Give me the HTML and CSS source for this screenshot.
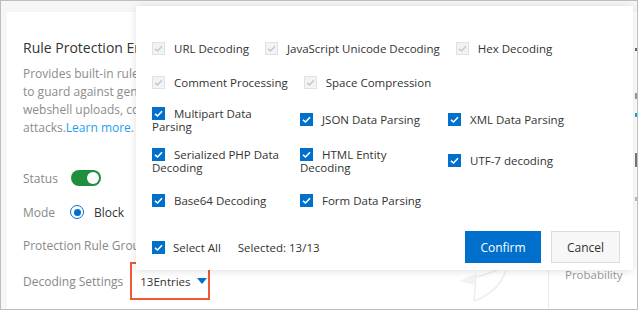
FILE: index.html
```html
<!DOCTYPE html>
<html>
<head>
<meta charset="utf-8">
<link rel="stylesheet" href="styles.css">
</head>
<body>
<div class="frame">
  <div class="card">
    <div class="main">
      <h2 class="title clip">Rule Protection Engine</h2>
      <div class="desc">
        <div class="line clip">Provides built-in rule groups</div>
        <div class="line clip">to guard against generic web attacks</div>
        <div class="line clip">webshell uploads, command injection</div>
        <div class="line">attacks.<a class="link">Learn more</a>.</div>
      </div>
      <div class="row row-status">
        <span class="lbl">Status</span>
        <span class="switch"><span class="knob"></span></span>
      </div>
      <div class="row row-mode">
        <span class="lbl">Mode</span>
        <span class="radio"><span class="dot"></span></span>
        <span class="radio-text">Block</span>
      </div>
      <div class="row row-group">
        <span class="lbl clip">Protection Rule Group</span>
      </div>
      <div class="row row-dec">
        <span class="lbl">Decoding Settings</span>
        <span class="entries">13Entries<span class="caret"></span></span>
      </div>
    </div>
    <div class="side">
      <div class="prob">Probability</div>
    </div>
    <div class="edge">
      <span class="mk mk1"></span>
      <span class="mk mk2"></span>
      <span class="mk mk3"></span>
      <span class="mk mk4"></span>
      <span class="mk mk5"></span>
    </div>
    <svg class="leaf" width="60" height="40" viewBox="0 0 60 40">
      <path d="M2 16 L20 8 L18 20 Z" fill="#f2f2f2"/>
      <path d="M17 36 L19 12 Q32 9 42 4" stroke="#ededed" stroke-width="1.4" fill="none"/>
      <path d="M17 36 Q44 26 50 2" stroke="#ededed" stroke-width="1.4" fill="none"/>
    </svg>
  </div>

  <div class="popup">
    <div class="flow">
      <label class="opt"><span class="cb dis"><svg viewBox="0 0 13 13"><path d="M3 6.8 L5.5 9 L10 4.3"/></svg></span><span class="t">URL Decoding</span></label>
      <label class="opt"><span class="cb dis"><svg viewBox="0 0 13 13"><path d="M3 6.8 L5.5 9 L10 4.3"/></svg></span><span class="t">JavaScript Unicode Decoding</span></label>
      <label class="opt"><span class="cb dis"><svg viewBox="0 0 13 13"><path d="M3 6.8 L5.5 9 L10 4.3"/></svg></span><span class="t">Hex Decoding</span></label>
    </div>
    <div class="flow">
      <label class="opt"><span class="cb dis"><svg viewBox="0 0 13 13"><path d="M3 6.8 L5.5 9 L10 4.3"/></svg></span><span class="t">Comment Processing</span></label>
      <label class="opt"><span class="cb dis"><svg viewBox="0 0 13 13"><path d="M3 6.8 L5.5 9 L10 4.3"/></svg></span><span class="t">Space Compression</span></label>
    </div>
    <div class="grid">
      <label class="gopt"><span class="cb on"><svg viewBox="0 0 13 13"><path d="M3 6.8 L5.5 9 L10 4.3"/></svg></span>Multipart Data Parsing</label>
      <label class="gopt"><span class="cb on"><svg viewBox="0 0 13 13"><path d="M3 6.8 L5.5 9 L10 4.3"/></svg></span>JSON Data Parsing</label>
      <label class="gopt"><span class="cb on"><svg viewBox="0 0 13 13"><path d="M3 6.8 L5.5 9 L10 4.3"/></svg></span>XML Data Parsing</label>
      <label class="gopt"><span class="cb on"><svg viewBox="0 0 13 13"><path d="M3 6.8 L5.5 9 L10 4.3"/></svg></span>Serialized PHP Data Decoding</label>
      <label class="gopt"><span class="cb on"><svg viewBox="0 0 13 13"><path d="M3 6.8 L5.5 9 L10 4.3"/></svg></span>HTML Entity Decoding</label>
      <label class="gopt"><span class="cb on"><svg viewBox="0 0 13 13"><path d="M3 6.8 L5.5 9 L10 4.3"/></svg></span>UTF-7 decoding</label>
      <label class="gopt"><span class="cb on"><svg viewBox="0 0 13 13"><path d="M3 6.8 L5.5 9 L10 4.3"/></svg></span>Base64 Decoding</label>
      <label class="gopt"><span class="cb on"><svg viewBox="0 0 13 13"><path d="M3 6.8 L5.5 9 L10 4.3"/></svg></span>Form Data Parsing</label>
    </div>
    <div class="footer">
      <label class="opt all"><span class="cb on"><svg viewBox="0 0 13 13"><path d="M3 6.8 L5.5 9 L10 4.3"/></svg></span><span class="t">Select All</span></label>
      <span class="count">Selected: 13/13</span>
      <span class="spacer"></span>
      <button class="btn primary">Confirm</button>
      <button class="btn">Cancel</button>
    </div>
  </div>
</div>
</body>
</html>
```

FILE: styles.css
```css
* { box-sizing: border-box; }
html, body { margin: 0; padding: 0; }
body {
  font-family: "Segoe UI", "Open Sans", "Liberation Sans", sans-serif;
  font-size: 12px;
  color: #333;
  background: #fff;
}
.frame {
  position: relative;
  width: 638px;
  height: 310px;
  border: 1px solid #bdbdbd;
  background: #f6f6f6;
  overflow: hidden;
  padding: 11px 0 0 6px;
}
.card {
  position: relative;
  display: flex;
  height: 298px;
  background: #fff;
  border-bottom: 1px solid #d4d4d4;
}
.main {
  width: 541px;
  padding: 26px 0 0 16px;
  overflow: hidden;
}
.clip {
  display: block;
  width: 113px;
  overflow: hidden;
  white-space: nowrap;
}
.title {
  margin: 0;
  font-size: 14px;
  font-weight: normal;
  line-height: 20px;
  color: #333;
}
.desc {
  margin-top: 7px;
  color: #8c8c8c;
  line-height: 18px;
}
.line { white-space: nowrap; }
.link { color: #1a9ff0; }
.row {
  display: flex;
  align-items: center;
  height: 24px;
  white-space: nowrap;
}
.lbl { color: #888; min-width: 48px; }
.row-status { margin-top: 29px; }
.row-mode { margin-top: 10px; }
.row-group { margin-top: 9px; }
.row-dec { margin-top: 5px; height: 38px; }
.switch {
  display: inline-flex;
  align-items: center;
  justify-content: flex-end;
  width: 30px;
  height: 16px;
  border-radius: 8px;
  background: #1f8f3d;
  padding: 0 2px;
}
.knob {
  width: 12px;
  height: 12px;
  border-radius: 50%;
  background: #fff;
}
.radio {
  display: inline-flex;
  align-items: center;
  justify-content: center;
  width: 14px;
  height: 14px;
  border: 1.5px solid #0070cc;
  border-radius: 50%;
  margin-left: -1px;
}
.dot { width: 7px; height: 7px; border-radius: 50%; background: #0070cc; }
.radio-text { margin-left: 10px; color: #333; }
.entries {
  display: inline-flex;
  align-items: center;
  margin-left: 7px;
  height: 38px;
  width: 80px;
  border: 2px solid #ee5a35;
  padding-left: 8px;
  color: #333;
  font-size: 11.5px;
}
.caret {
  margin-left: 6px;
  width: 0;
  height: 0;
  border-left: 5px solid transparent;
  border-right: 5px solid transparent;
  border-top: 6px solid #0070cc;
}
.side {
  width: 85px;
  border-left: 1px solid #ebebeb;
  padding: 255px 0 0 16px;
}
.prob { color: #999; line-height: 16px; white-space: nowrap; font-size: 11.5px; }
.edge {
  width: 4px;
  display: flex;
  flex-direction: column;
  align-items: flex-start;
}
.mk { display: block; width: 2px; margin-left: 2px; }
.mk1 { margin-top: 36px; height: 3px; background: #666; }
.mk2 { margin-top: 42px; height: 6px; background: #999; }
.mk3 { margin-top: 14px; height: 4px; background: #1a9ff0; }
.mk4 { margin-top: 36px; height: 14px; background: #777; }
.mk5 { margin-top: 30px; height: 4px; background: #bbb; }
.leaf { position: absolute; left: 450px; top: 253px; }

.popup {
  position: absolute;
  left: 135px;
  top: 5px;
  width: 497px;
  height: 264px;
  background: #fff;
  box-shadow: 0 1px 8px rgba(0,0,0,0.13);
  padding: 25px 13px 0 16px;
  font-size: 11.5px;
}
.flow {
  display: flex;
  align-items: center;
  gap: 16px;
  height: 34px;
}
.opt {
  display: flex;
  align-items: center;
  white-space: nowrap;
  color: #333;
}
.cb {
  display: inline-block;
  width: 13px;
  height: 13px;
  margin-right: 9px;
  flex: none;
}
.cb svg { display: block; width: 13px; height: 13px; }
.cb path { fill: none; stroke-width: 1.6; }
.cb.dis { background: #f3f3f3; border: 1px solid #e1e1e1; }
.cb.dis svg { margin: -1px; }
.cb.dis path { stroke: #c8c8c8; }
.cb.on { background: #0070cc; }
.cb.on path { stroke: #fff; }
.grid {
  display: grid;
  grid-template-columns: 148px 148px 148px;
  grid-template-rows: 41px 41px 38px;
  align-items: center;
}
.gopt {
  display: block;
  width: 134px;
  line-height: 13px;
  color: #333;
}
.gopt .cb { vertical-align: -2px; }
.footer {
  display: flex;
  align-items: center;
  margin-top: 12px;
  height: 32px;
}
.all .cb { margin-right: 8px; }
.count { margin-left: 17px; }
.spacer { flex: 1; }
.btn {
  font: inherit;
  font-size: 12px;
  height: 32px;
  padding: 0;
  width: 69px;
  border: 1px solid #dcdcdc;
  background: #f7f7f7;
  color: #333;
  margin-left: 10px;
}
.btn.primary {
  width: 76px;
  background: #0070cc;
  border-color: #0070cc;
  color: #fff;
}
```
